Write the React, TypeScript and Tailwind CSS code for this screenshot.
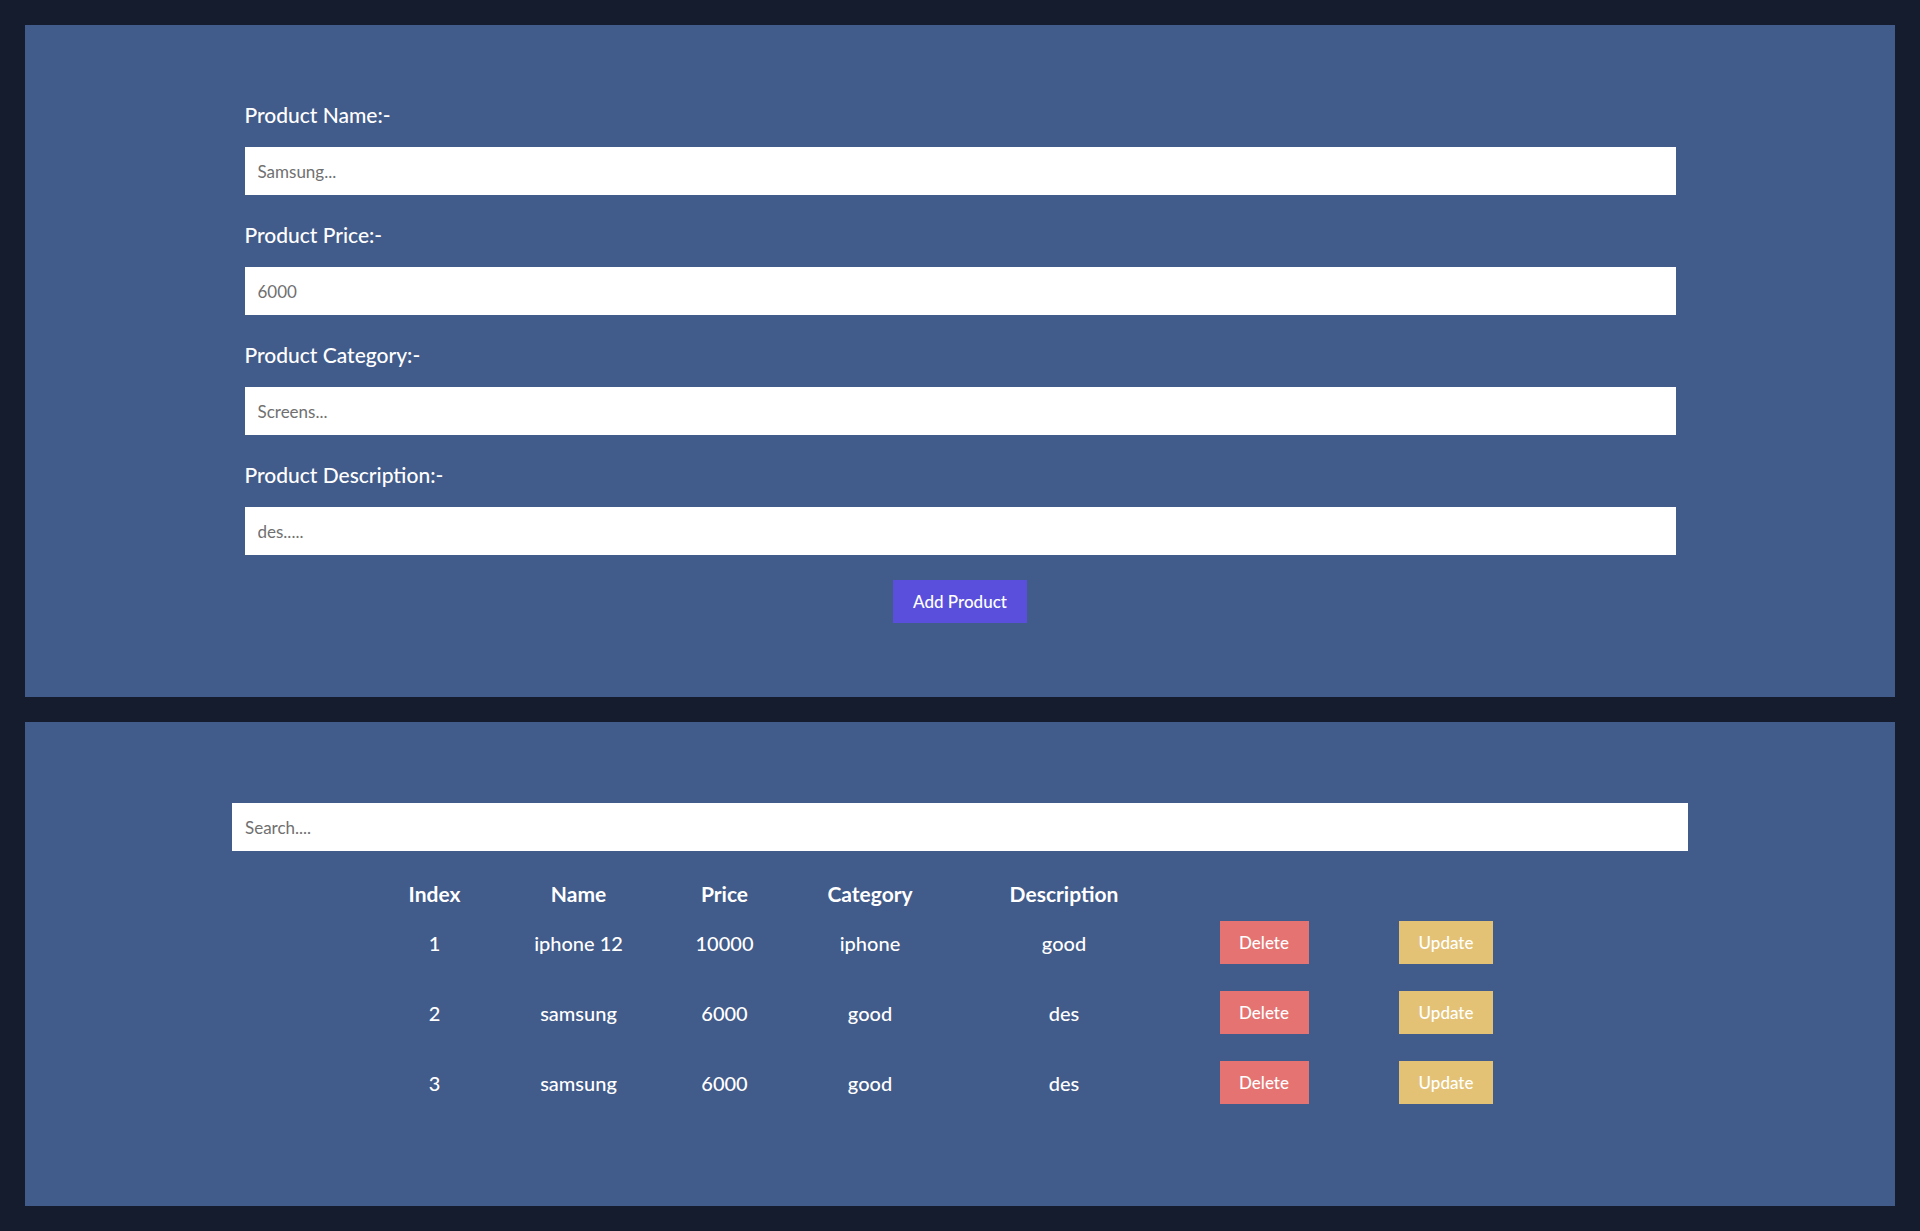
const fields = [
  { label: 'Product Name:-', placeholder: 'Samsung...' },
  { label: 'Product Price:-', placeholder: '6000' },
  { label: 'Product Category:-', placeholder: 'Screens...' },
  { label: 'Product Description:-', placeholder: 'des.....' },
];

const products = [
  { name: 'iphone 12', price: '10000', category: 'iphone', description: 'good' },
  { name: 'samsung', price: '6000', category: 'good', description: 'des' },
  { name: 'samsung', price: '6000', category: 'good', description: 'des' },
];

const cols = 'grid grid-cols-[145px_143px_149px_142px_246px_154px_210px] ml-[337px] w-fit';

export default function App() {
  return (
    <div className="min-h-screen bg-[#151c2e] p-[25px] flex flex-col gap-[25px] font-['Lato',sans-serif] text-white">

      {/* Form panel */}
      <section className="bg-[#415b8a] pt-[75px] pb-[74px] flex flex-col">
        <form className="mx-auto w-[1431px] flex flex-col gap-[25px]" onSubmit={(e) => e.preventDefault()}>
          {fields.map((f) => (
            <div key={f.label} className="flex flex-col gap-[17px]">
              <label className="text-[21px] leading-[30px] font-medium">{f.label}</label>
              <input
                className="h-[48px] w-full bg-white pl-[13px] text-[17px] text-black outline-none placeholder:text-[#707070]"
                placeholder={f.placeholder}
              />
            </div>
          ))}
        </form>
        <button className="mx-auto mt-[25px] w-[134px] h-[43px] bg-[#594fdc] text-[17px] font-medium text-white">
          Add Product
        </button>
      </section>

      {/* List panel */}
      <section className="bg-[#415b8a] pt-[81px] pb-[102px] flex flex-col">
        <input
          className="mx-auto h-[48px] w-[1456px] bg-white pl-[13px] text-[17px] text-black outline-none placeholder:text-[#707070]"
          placeholder="Search...."
        />

        <div className={`${cols} mt-[21px] h-[43px] items-center text-center text-[21px] font-bold`}>
          <span>Index</span>
          <span>Name</span>
          <span>Price</span>
          <span>Category</span>
          <span>Description</span>
          <span />
          <span />
        </div>

        <div className="mt-[6px] flex flex-col gap-[27px]">
          {products.map((p, i) => (
            <div key={i} className={`${cols} h-[43px] items-center text-center text-[20px] font-medium`}>
              <span>{i + 1}</span>
              <span>{p.name}</span>
              <span>{p.price}</span>
              <span>{p.category}</span>
              <span>{p.description}</span>
              <div className="flex justify-center">
                <button className="w-[89px] h-[43px] bg-[#e47372] text-[17px] font-medium text-white">Delete</button>
              </div>
              <div className="flex justify-center">
                <button className="w-[94px] h-[43px] bg-[#e3c275] text-[17px] font-medium text-white">Update</button>
              </div>
            </div>
          ))}
        </div>
      </section>
    </div>
  );
}
